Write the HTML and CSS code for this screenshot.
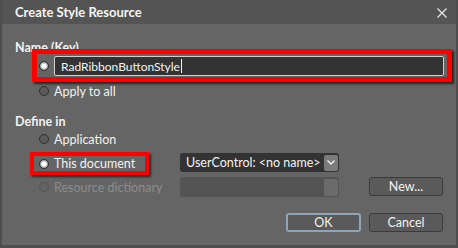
FILE: index.html
```html
<!DOCTYPE html>
<html lang="en">

<head>
    <meta charset="UTF-8">
    <title>Create Style Resource</title>
    <link rel="stylesheet" href="styles.css">
</head>

<body>
    <div class="dialog">
        <div class="title-bar">
            <span class="title">Create Style Resource</span>
            <svg class="close" width="10" height="10" viewBox="0 0 10 10">
                <path d="M0.5 0.5 L9.5 9.5 M9.5 0.5 L0.5 9.5" stroke="#e6e6e6" stroke-width="1.3" fill="none" />
            </svg>
        </div>

        <div class="content">
            <p class="section-label">Name (Key)</p>
            <div class="highlight name-row">
                <span class="radio checked"></span>
                <div class="textbox">RadRibbonButtonStyle<span class="caret"></span></div>
            </div>
            <label class="option apply">
                <span class="radio"></span>Apply to all
            </label>

            <p class="section-label define">Define in</p>
            <div class="define-grid">
                <label class="option">
                    <span class="radio"></span>Application
                </label>
                <span></span>
                <span></span>

                <div class="highlight doc-row">
                    <span class="radio checked"></span>This document
                </div>
                <div class="combo">
                    <span class="combo-text">UserControl: &lt;no name&gt;</span>
                    <span class="combo-btn">
                        <svg width="8" height="5" viewBox="0 0 8 5">
                            <path d="M0.5 0.5 L4 4 L7.5 0.5" stroke="#f2f2f2" stroke-width="1.4" fill="none" />
                        </svg>
                    </span>
                </div>
                <span></span>

                <label class="option disabled">
                    <span class="radio"></span>Resource dictionary
                </label>
                <div class="combo combo-disabled">
                    <span class="combo-text"></span>
                    <span class="combo-btn"></span>
                </div>
                <button class="btn new-btn">New...</button>
            </div>

            <div class="actions">
                <button class="btn default">OK</button>
                <button class="btn">Cancel</button>
            </div>
        </div>
    </div>
</body>

</html>
```

FILE: styles.css
```css
body {
    margin: 0;
    padding: 0;
    font-family: Lato, "Noto Sans", sans-serif;
    font-size: 12.5px;
    color: #f2f2f2;
    background-color: #4b4b4b;
}

.dialog {
    width: 458px;
    height: 248px;
    box-sizing: border-box;
    background-color: #656565;
    border: 2px solid #4e4e4e;
    border-bottom-width: 3px;
    border-top: none;
}

.title-bar {
    height: 24px;
    background-color: #545454;
    display: flex;
    align-items: center;
    justify-content: space-between;
    padding: 0 9px 0 13px;
}

.title {
    font-weight: bold;
    font-size: 13px;
    color: #f4f4f4;
}

.close {
    margin-top: 1px;
}

.content {
    padding: 16px 13px 0 13px;
}

.section-label {
    margin: 0;
    font-weight: bold;
    line-height: 16px;
    height: 14px;
}

.highlight {
    border: 5px solid #ff0000;
    box-shadow: 2px 2px 2px rgba(0, 0, 0, 0.65);
    box-sizing: border-box;
    display: flex;
    align-items: center;
}

.name-row {
    position: relative;
    margin: -5px 0 0 17px;
    width: 420px;
    height: 33px;
    padding: 1px 3px 0 2px;
    gap: 5px;
}

.radio {
    width: 10px;
    height: 10px;
    box-sizing: border-box;
    border-radius: 50%;
    border: 1px solid #2f2f2f;
    background-color: #5c5c5c;
    flex-shrink: 0;
}

.radio.checked {
    background: radial-gradient(circle, #ffffff 0, #ffffff 2px, #bdbdbd 3px, #7a7a7a 5px);
}

.textbox {
    flex: 1;
    height: 20px;
    box-sizing: border-box;
    background-color: #333333;
    border: 1px solid #d0d0d0;
    border-radius: 2px;
    padding-left: 6px;
    display: flex;
    align-items: center;
    color: #f4f4f4;
    font-size: 12px;
}

.caret {
    width: 1px;
    height: 14px;
    margin-left: 1px;
    background-color: #f4f4f4;
}

.option {
    display: flex;
    align-items: center;
    gap: 5px;
    height: 16px;
    margin-left: 24px;
    white-space: nowrap;
}

.apply {
    margin-top: 1px;
}

.define {
    margin-top: 15px;
}

.define-grid {
    display: grid;
    grid-template-columns: 135px 159px 74px;
    column-gap: 30px;
    align-items: start;
    margin-top: 3px;
}

.doc-row {
    margin: 5px 0 0 15px;
    width: 119px;
    height: 23px;
    border-width: 4px;
    padding-left: 5px;
    gap: 5px;
    white-space: nowrap;
}

.combo {
    margin-top: 6px;
    height: 19px;
    box-sizing: border-box;
    background-color: #333333;
    border-radius: 3px;
    display: flex;
    align-items: center;
    justify-content: space-between;
    padding: 0 1px 0 6px;
}

.combo-btn {
    width: 14px;
    height: 16px;
    background-color: #7b7b7b;
    border-radius: 2px;
    display: flex;
    align-items: center;
    justify-content: center;
}

.option.disabled {
    margin-top: 4px;
    color: #8c8c8c;
}

.option.disabled .radio {
    border-color: #555555;
    background-color: #636363;
}

.combo-disabled {
    margin-top: 2px;
    height: 20px;
    background-color: #545454;
}

.combo-disabled .combo-btn {
    height: 17px;
    background-color: #6b6b6b;
}

.btn {
    font-family: inherit;
    font-size: 12.5px;
    color: #f2f2f2;
    background-color: #5a5a5a;
    border: 1px solid #3a3a3a;
    border-radius: 3px;
    width: 74px;
    height: 19px;
    padding: 0;
}

.new-btn {
    margin-top: 2px;
}

.actions {
    display: flex;
    justify-content: flex-end;
    gap: 8px;
    margin-top: 16px;
}

.btn.default {
    width: 75px;
    border: 2px solid #8ea4bb;
}
```
